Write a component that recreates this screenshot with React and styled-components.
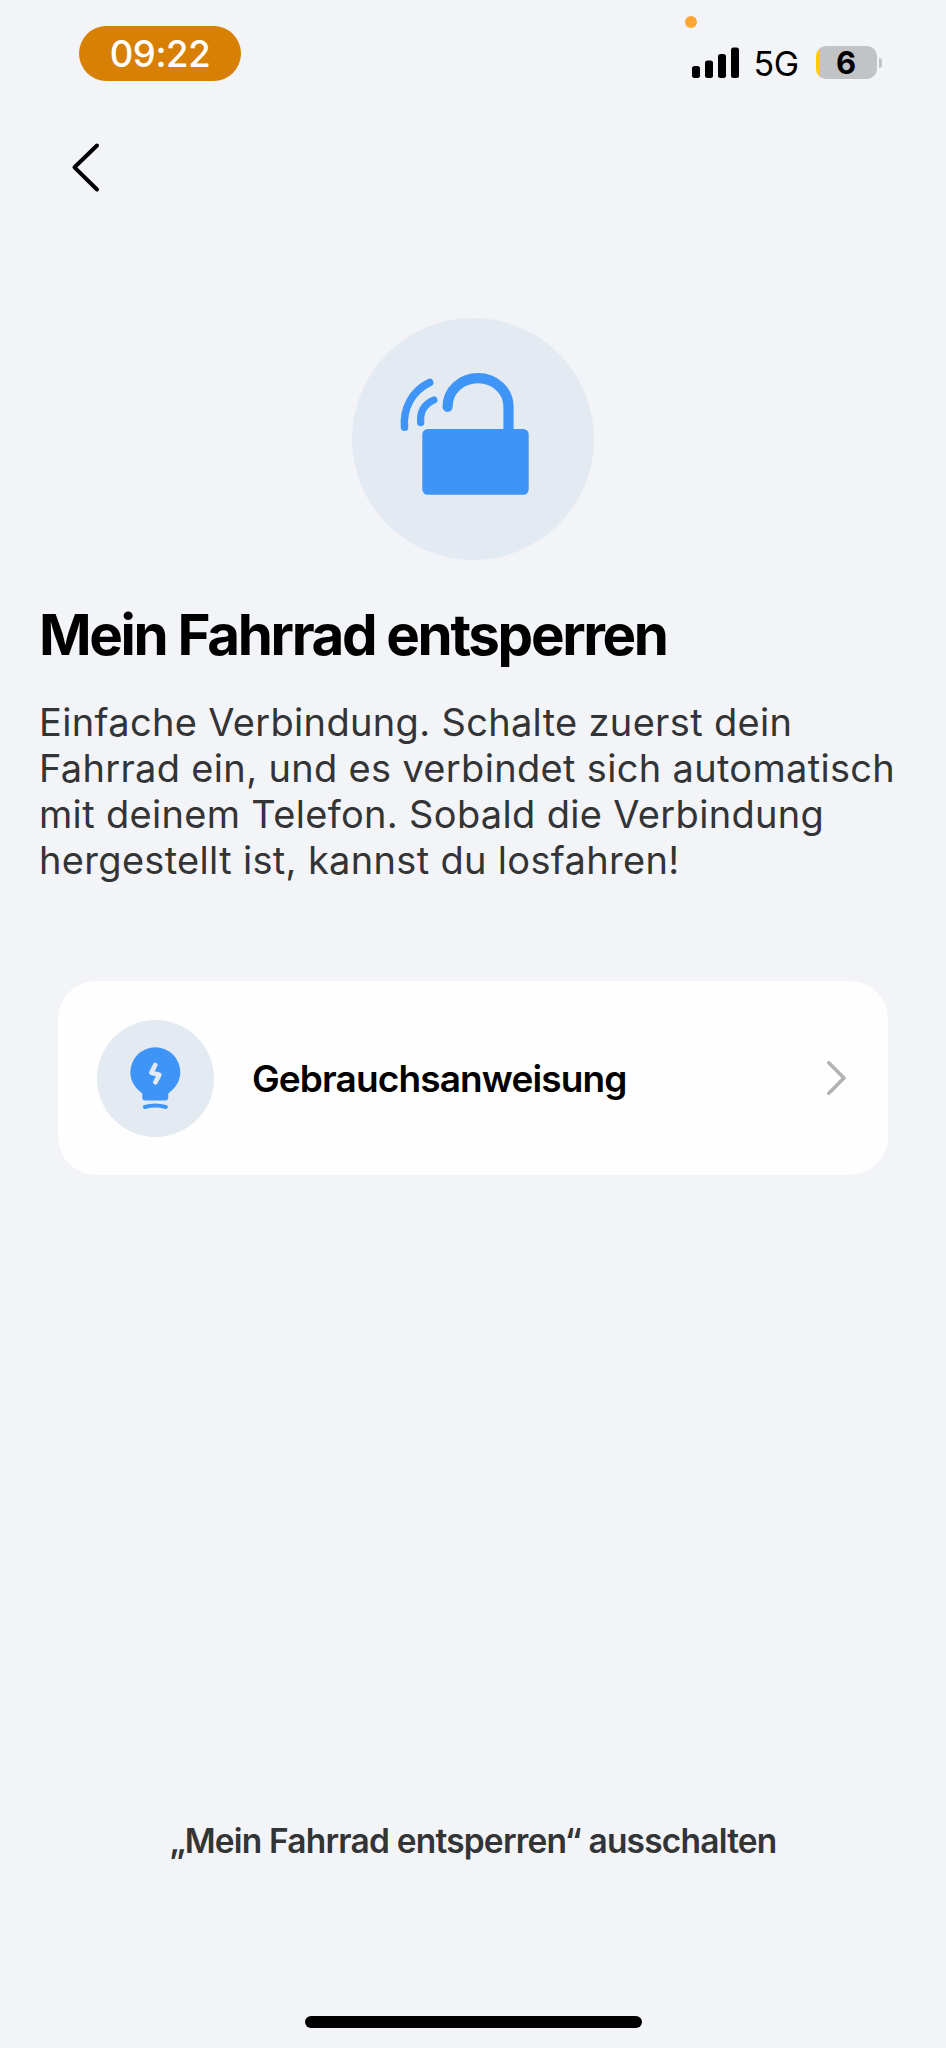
import styled, { createGlobalStyle } from 'styled-components';

const GlobalStyle = createGlobalStyle`
  * {
    box-sizing: border-box;
  }

  body {
    margin: 0;
    background: #f3f4f8;
    font-family: Inter, 'Liberation Sans', sans-serif;
  }

  svg {
    display: block;
  }
`

const Screen = styled.div`
  display: flex;
  flex-direction: column;
  width: 946px;
  height: 2048px;
  overflow: hidden;
`

const StatusBar = styled.header`
  position: relative;
  display: flex;
  justify-content: space-between;
  align-items: flex-start;
  height: 134px;
  padding: 26px 64px 0 79px;
`

const TimePill = styled.div`
  width: 162px;
  height: 55px;
  border-radius: 28px;
  background: #d88004;
  color: #fff;
  font-size: 36.5px;
  font-weight: 500;
  line-height: 57px;
  letter-spacing: -0.4px;
  text-align: center;
`

const StatusIcons = styled.div`
  display: flex;
  align-items: center;
  height: 33px;
  margin-top: 20px;
`

const MicDot = styled.span`
  position: absolute;
  top: 16px;
  left: 685px;
  width: 12px;
  height: 12px;
  border-radius: 50%;
  background: #fda732;
`

const Network = styled.span`
  margin: 2px 0 0 14px;
  width: 62px;
  color: #000;
  font-size: 34px;
  line-height: 33px;
  letter-spacing: -0.5px;
`

const Battery = styled.div`
  width: 61px;
  height: 33px;
  border-radius: 10px;
  background: linear-gradient(to right, #ffcc00 4.5px, #c2c3c5 4.5px);
  font-size: 31px;
  font-weight: 700;
  line-height: 34px;
  text-align: center;
`

const BatteryCap = styled.span`
  width: 3px;
  height: 10px;
  margin-left: 2.5px;
  border-radius: 0 3px 3px 0;
  background: #c2c3c5;
`

const BackButton = styled.button`
  align-self: flex-start;
  margin-left: 61.5px;
  padding: 0;
  border: 0;
  background: none;
`

const Round = styled.div`
  flex: none;
  width: ${(props) => props.$size}px;
  height: ${(props) => props.$size}px;
  border-radius: 50%;
  background: #e3eaf2;
`

const Hero = styled.div`
  display: flex;
  justify-content: center;
  margin-top: 118px;
`

const Intro = styled.section`
  height: 374px;
  margin-top: 41px;
  padding: 0 39px;
`

const Title = styled.h1`
  margin: 0;
  color: #000;
  font-size: 56.5px;
  font-weight: 650;
  line-height: 68px;
  letter-spacing: -2.35px;
  white-space: nowrap;
`

const Description = styled.p`
  margin: 30px 0 0;
  color: #333435;
  font-size: 38px;
  line-height: 46.1px;
  letter-spacing: 0.32px;
  white-space: nowrap;
`

const GuideCard = styled.a`
  display: flex;
  align-items: center;
  height: 194px;
  margin: 6px 58px 0;
  padding: 0 39px;
  border-radius: 38px;
  background: #fefefe;
`

const GuideLabel = styled.span`
  flex: 1;
  margin-left: 38px;
  color: #000;
  font-size: 37px;
  font-weight: 600;
  letter-spacing: -0.87px;
`

const DisableButton = styled.button`
  margin-top: auto;
  padding: 0;
  border: 0;
  background: none;
  color: #333435;
  font-family: inherit;
  font-size: 33.5px;
  font-weight: 600;
  line-height: 40px;
  letter-spacing: -0.8px;
`

const HomeIndicator = styled.div`
  align-self: center;
  width: 337px;
  height: 12px;
  margin: 155px 0 20px;
  border-radius: 6px;
  background: #000;
`

const SignalIcon = () => (
  <svg width='48' height='31' viewBox='0 0 48 31'>
    <rect x='0' y='19' width='8' height='12' rx='2.5' />
    <rect x='13' y='13.5' width='8' height='17.5' rx='2.5' />
    <rect x='26' y='7' width='8' height='24' rx='2.5' />
    <rect x='39' y='0.5' width='8' height='30.5' rx='2.5' />
  </svg>
)

const BackIcon = () => (
  <svg width='46' height='66' viewBox='0 0 46 66' fill='none' stroke='#000' strokeWidth='4' strokeLinecap='round' strokeLinejoin='round'>
    <path d='M35 11.5L12.5 33.3L35 55.5' />
  </svg>
)

const LockIcon = () => (
  <svg width='242' height='242' viewBox='0.5 0.5 242 242' fill='none' stroke='#3e95f7' strokeLinecap='round'>
    <rect x='70.8' y='111.5' width='106.4' height='65.8' rx='5.5' fill='#3e95f7' stroke='none' />
    <path d='M96.1 89.3C96.1 73 109.5 60.7 126.5 60.7S157 73.2 157 89.3V114' strokeWidth='10.2' />
    <path d='M78.2 65C60 73.5 51.5 91.5 53 109.7' strokeWidth='7.5' />
    <path d='M82.3 82.5C72.5 86.8 68.3 95 69.2 105' strokeWidth='7.3' />
  </svg>
)

const BulbIcon = () => (
  <svg width='117' height='117' viewBox='0 0 117 117' fill='none' strokeLinecap='round' strokeLinejoin='round'>
    <path d='M58.3 27.3a25 25 0 0 1 25 25c0 9-5 15.8-12 21.2V77.5a3 3 0 0 1-3 3H48.3a3 3 0 0 1-3-3V73.5c-7-5.4-12-12.2-12-21.2a25 25 0 0 1 25-25Z' fill='#3e95f7' />
    <path d='M58.3 45L54.3 52.8L62.3 54.8L58.3 62.3' stroke='#e3eaf2' strokeWidth='4.6' />
    <path d='M47.8 87Q58.3 84 68.8 87' stroke='#3e95f7' strokeWidth='4' />
  </svg>
)

const ChevronIcon = () => (
  <svg width='22' height='40' viewBox='0 0 22 40' fill='none' stroke='#b0b1b3' strokeWidth='3.5' strokeLinecap='round' strokeLinejoin='round'>
    <path d='M1.8 4.8L17 20L1.8 35.2' />
  </svg>
)

const App = () => {
  return (
    <>
      <GlobalStyle />
      <Screen>
        <StatusBar>
          <TimePill>09:22</TimePill>
          <MicDot />
          <StatusIcons>
            <SignalIcon />
            <Network>5G</Network>
            <Battery>6</Battery>
            <BatteryCap />
          </StatusIcons>
        </StatusBar>
        <BackButton aria-label='Zurück'>
          <BackIcon />
        </BackButton>
        <Hero>
          <Round $size={242}>
            <LockIcon />
          </Round>
        </Hero>
        <Intro>
          <Title>Mein Fahrrad entsperren</Title>
          <Description>
            Einfache Verbindung. Schalte zuerst dein<br />
            Fahrrad ein, und es verbindet sich automatisch<br />
            mit deinem Telefon. Sobald die Verbindung<br />
            hergestellt ist, kannst du losfahren!
          </Description>
        </Intro>
        <GuideCard>
          <Round $size={117}>
            <BulbIcon />
          </Round>
          <GuideLabel>Gebrauchsanweisung</GuideLabel>
          <ChevronIcon />
        </GuideCard>
        <DisableButton>„Mein Fahrrad entsperren“ ausschalten</DisableButton>
        <HomeIndicator />
      </Screen>
    </>
  )
}

export default App;
